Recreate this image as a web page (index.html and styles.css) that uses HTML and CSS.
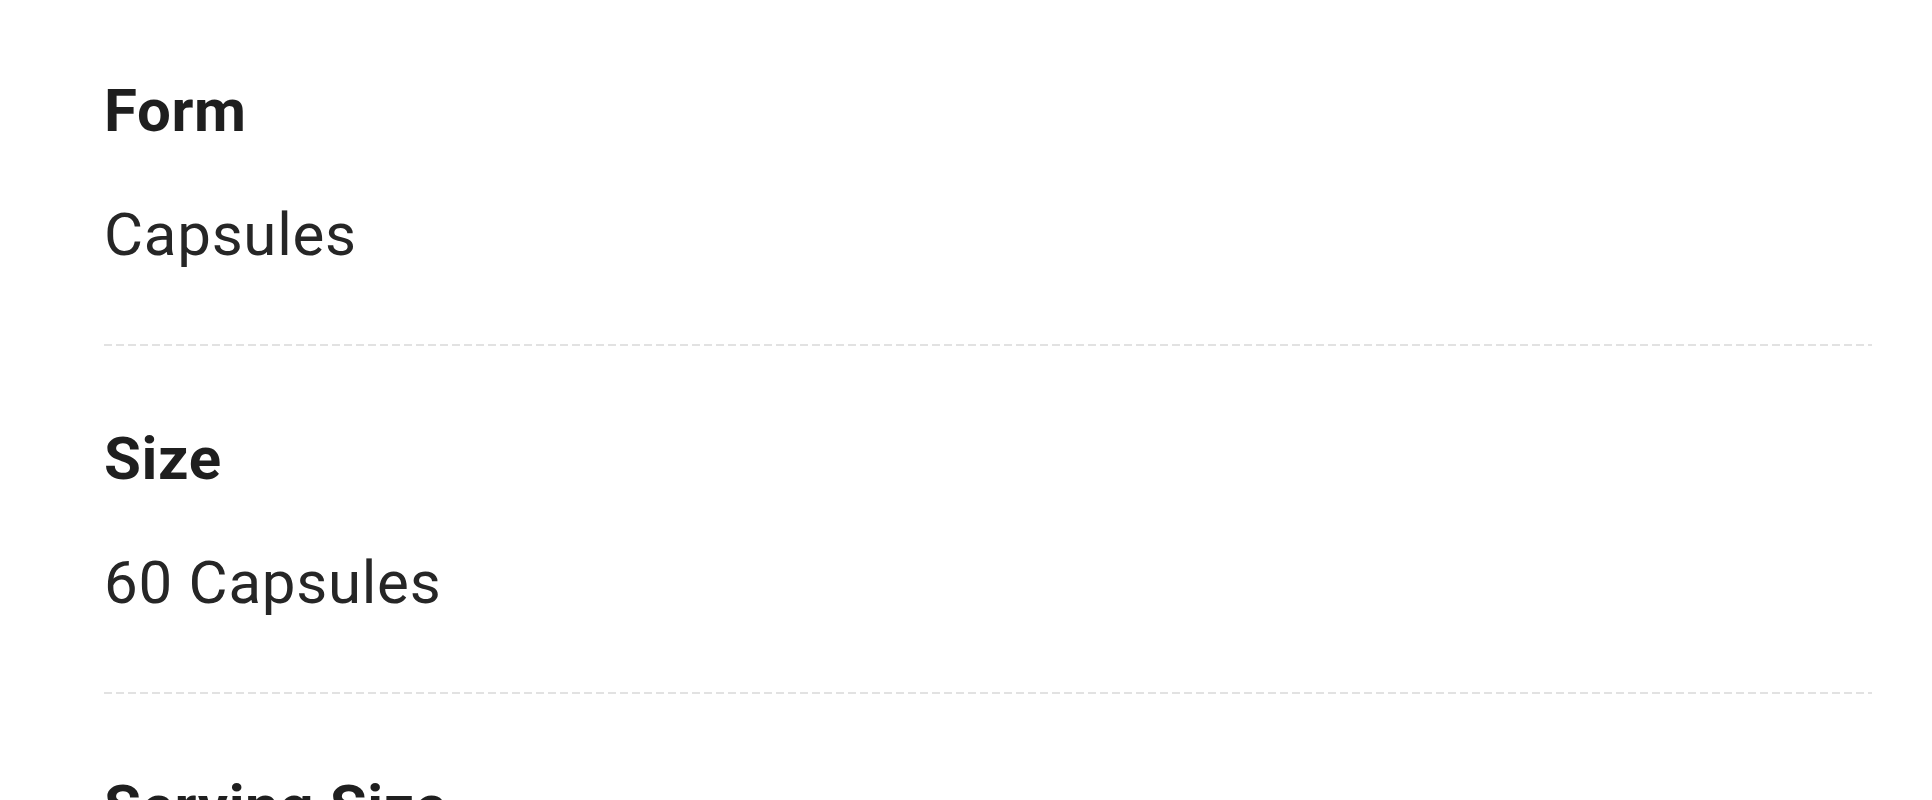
FILE: index.html
```html
<!DOCTYPE html>
<html lang="en">
<head>
    <meta charset="UTF-8">
    <meta name="viewport" content="width=device-width, initial-scale=1.0">
    <title>Product Details</title>
    <link rel="stylesheet" href="styles.css">
</head>
<body>

    <div class="details">
        <div class="detail-row">
            <div class="detail-label">Form</div>
            <div class="detail-value">Capsules</div>
        </div>
        <div class="detail-row">
            <div class="detail-label">Size</div>
            <div class="detail-value">60 Capsules</div>
        </div>
        <div class="detail-row">
            <div class="detail-label">Serving Size</div>
            <div class="detail-value">2 Capsules</div>
        </div>
    </div>

</body>
</html>
```

FILE: styles.css
```css
body {
    margin: 0;
    background-color: #fff;
    color: #222;
    font-family: Roboto, "Noto Sans", Arial, sans-serif;
}
.details {
    display: flex;
    flex-direction: column;
    padding: 75px 60px 0 104px;
}
.detail-row {
    display: flex;
    flex-direction: column;
    gap: 52px;
    padding: 77px 0 75px;
    background-image: repeating-linear-gradient(to right, #e2e2e2 0 8px, transparent 8px 12px);
    background-size: 100% 2px;
    background-position: left bottom;
    background-repeat: no-repeat;
}
.detail-row:first-child {
    padding-top: 0;
}
.detail-label {
    font-size: 60px;
    line-height: 72px;
    font-weight: bold;
    letter-spacing: 0.6px;
    color: #1f1f1f;
}
.detail-value {
    font-size: 60px;
    line-height: 72px;
    letter-spacing: 0.75px;
    color: #262626;
}
```
